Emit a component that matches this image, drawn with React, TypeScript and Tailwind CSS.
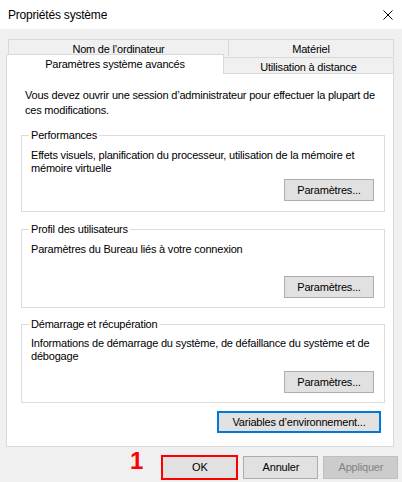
import type { ReactNode } from "react";

const Btn = ({ children, className = "" }: { children: ReactNode; className?: string }) => (
  <button
    type="button"
    className={`h-[22px] border border-[#adadad] bg-[#e1e1e1] text-[11px] tracking-[-0.2px] leading-none text-black ${className}`}
  >
    {children}
  </button>
);

const Group = ({ title, children, className = "" }: { title: string; children: ReactNode; className?: string }) => (
  <fieldset className={`border border-[#dcdcdc] pl-[9px] pr-[10px] ${className}`}>
    <legend className="-ml-[2px] px-[2px] leading-[13px]">{title}</legend>
    {children}
  </fieldset>
);

export default function App() {
  return (
    <div className="w-[402px] h-[482px] overflow-hidden bg-[#f0f0f0] font-['Liberation_Sans',Arial,sans-serif] text-[11px] tracking-[-0.2px] text-black">
      {/* Title bar */}
      <div className="h-[29px] bg-white flex items-center justify-between pl-[8px] pr-[9px]">
        <span className="text-[12px] leading-none">Propriétés système</span>
        <svg width="10" height="10" viewBox="0 0 10 10">
          <path d="M0.5 0.5 L9.5 9.5 M9.5 0.5 L0.5 9.5" stroke="#000" strokeWidth="1" fill="none" />
        </svg>
      </div>

      <div className="pl-[6px] pt-[10px] w-[394px]">
        {/* Tabs, back row */}
        <div className="flex pl-[2px]">
          <div className="w-[221px] h-[17px] border-t border-l border-r border-[#d9d9d9] flex items-center justify-center pt-[2px]">
            Nom de l’ordinateur
          </div>
          <div className="w-[165px] h-[17px] border-t border-r border-[#d9d9d9] flex items-center justify-center pt-[2px]">
            Matériel
          </div>
        </div>
        {/* Tabs, front row */}
        <div className="flex items-end -mt-[2px]">
          <div className="relative z-10 w-[218px] h-[20px] bg-white border-t border-l border-r border-[#d9d9d9] flex items-center justify-center pb-[1px]">
            Paramètres système avancés
          </div>
          <div className="w-[170px] h-[17px] border-t border-r border-[#d9d9d9] flex items-center justify-center pt-[2px]">
            Utilisation à distance
          </div>
        </div>

        {/* Panel */}
        <div className="-mt-px w-[388px] h-[374px] bg-white border border-[#d9d9d9] pl-[14px] pr-[8px] pt-[14px]">
          <p className="pl-[4px] leading-[15px] whitespace-nowrap">
            Vous devez ouvrir une session d’administrateur pour effectuer la plupart de
            <br />
            ces modifications.
          </p>

          <Group title="Performances" className="mt-[11px] pb-[10px]">
            <p className="pt-[7px] leading-[13px] whitespace-nowrap">
              Effets visuels, planification du processeur, utilisation de la mémoire et
              <br />
              mémoire virtuelle
            </p>
            <div className="flex justify-end mt-[4px]">
              <Btn className="w-[90px]">Paramètres...</Btn>
            </div>
          </Group>

          <Group title="Profil des utilisateurs" className="mt-[11px] pb-[9px]">
            <p className="pt-[7px] leading-[13px] whitespace-nowrap">Paramètres du Bureau liés à votre connexion</p>
            <div className="flex justify-end mt-[20px]">
              <Btn className="w-[90px]">Paramètres...</Btn>
            </div>
          </Group>

          <Group title="Démarrage et récupération" className="mt-[10px] pb-[9px]">
            <p className="pt-[6px] leading-[13px] whitespace-nowrap">
              Informations de démarrage du système, de défaillance du système et de
              <br />
              débogage
            </p>
            <div className="flex justify-end mt-[8px]">
              <Btn className="w-[90px]">Paramètres...</Btn>
            </div>
          </Group>

          <div className="flex justify-end mt-[8px] pr-[4px]">
            <button
              type="button"
              className="w-[164px] h-[22px] border-2 border-[#0078d7] bg-[#e1e1e1] text-[11px] tracking-[-0.2px] leading-none"
            >
              Variables d’environnement...
            </button>
          </div>
        </div>
      </div>

      {/* Dialog buttons */}
      <div className="flex items-start mt-[8px] pl-[130px]">
        <span className="-mt-[6px] text-[24px] tracking-normal font-bold leading-none text-[#ff0000]">1</span>
        <button
          type="button"
          className="ml-[18px] w-[77px] h-[25px] border-2 border-[#ff0000] bg-[#e1e1e1] text-[11px] tracking-[-0.2px] leading-none"
        >
          OK
        </button>
        <Btn className="ml-[5px] mt-[1px] h-[23px] w-[75px]">Annuler</Btn>
        <button
          type="button"
          className="ml-[5px] mt-[1px] w-[75px] h-[23px] border border-[#bfbfbf] bg-[#cccccc] text-[11px] tracking-[-0.2px] leading-none text-[#838383]"
        >
          Appliquer
        </button>
      </div>
    </div>
  );
}
